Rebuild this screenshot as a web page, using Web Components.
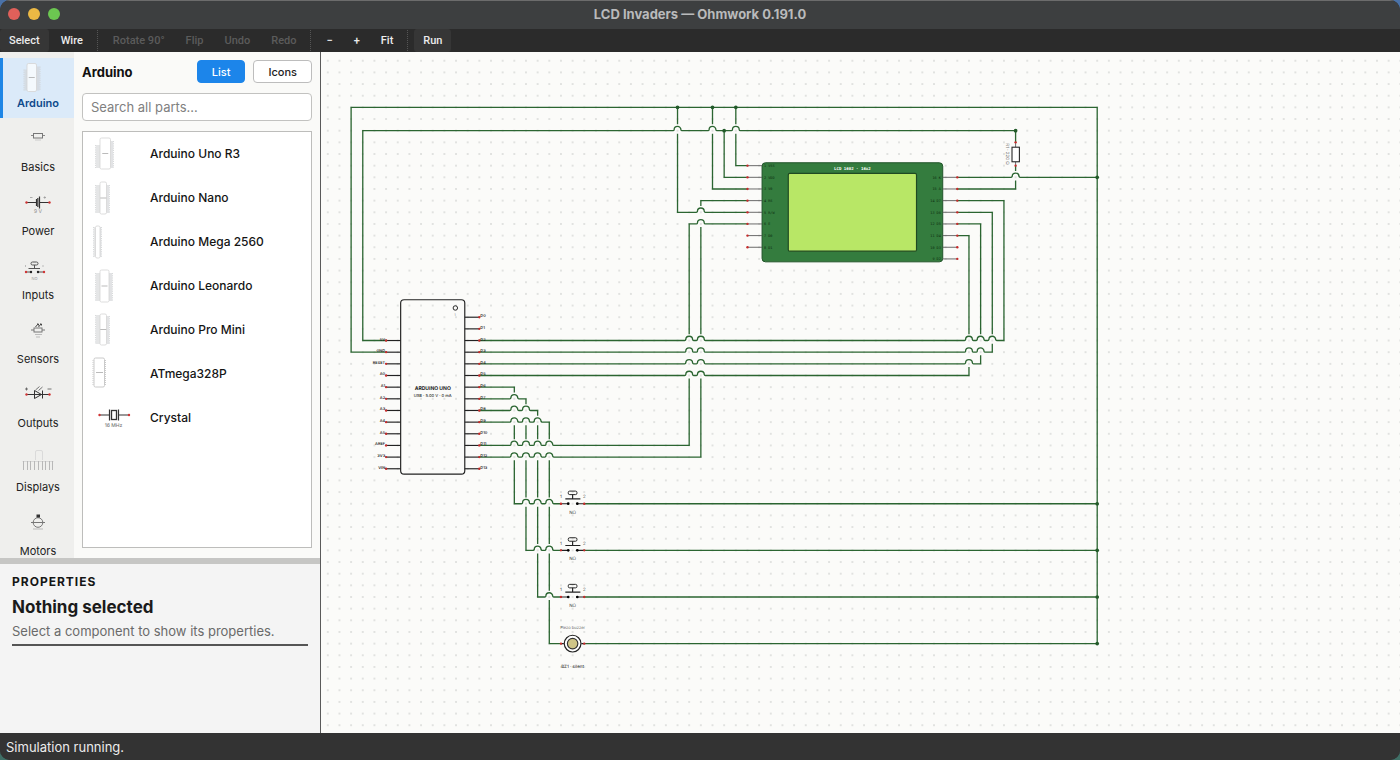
<!DOCTYPE html>
<html lang="en">
<head>
<meta charset="utf-8">
<title>LCD Invaders — Ohmwork 0.191.0</title>
<style>
html,body{margin:0;height:100%}
body{font-family:Inter,"Liberation Sans",sans-serif;font-size:13px;background:linear-gradient(#4a72a8,#5b7d86 50%,#3f6f66);overflow:hidden}
</style>
</head>
<body>
<ohm-window></ohm-window>
<script>
function define(name, html, setup) {
  const template = document.createElement('template');
  template.innerHTML = '<style>*{box-sizing:border-box}button,input{font:inherit;color:inherit;margin:0}</style>' + html;
  customElements.define(name, class extends HTMLElement {
    connectedCallback() {
      if (this.shadowRoot) return;
      this.attachShadow({ mode: 'open' }).append(template.content.cloneNode(true));
      if (setup) setup(this, this.shadowRoot);
    }
  });
}

/* ---- part artwork ---- */
const board = (l, r, t, b, bl, br, tl = t + 6, tr = t + 3) => `
  <rect x="${l + 1}" y="${tl}" width="${bl - l - 1}" height="${b - tl - 1}" fill="#cfd1d3" opacity=".55"/>
  <rect x="${br}" y="${tr}" width="${r - br - 1}" height="${b - tr - 1}" fill="#cfd1d3" opacity=".6"/>
  <path d="M${l + .5} ${tl}V${b - 1}M${r - .5} ${tr}V${b - 1}" stroke="#cfd1d3" stroke-dasharray="1.2 1" opacity=".8"/>
  <rect x="${bl}" y="${t}" width="${br - bl}" height="${b - t}" rx="1.5" fill="#fff" fill-opacity=".7" stroke="#d4d4d4" stroke-width=".8"/>
  <path d="M${(bl + br) / 2 - 3} ${(t + b) / 2}h6" stroke="#aaa" stroke-width=".8"/>`;
const dots = (y, ...xs) => xs.map(x => `<circle cx="${x}" cy="${y}" r="1.2" fill="#d03434"/>`).join('');
const ART = {
  arduino: board(23.5, 40.5, 5.5, 33.5, 27, 36.5),
  basics: `<g fill="none" stroke="#8a8a8a"><path d="M31 13.5h3M42 13.5h3"/><rect x="33.5" y="11.5" width="9" height="4.5" stroke="#777"/><path d="M35 18h6" stroke="#ccc"/></g>`,
  power: `<g stroke="#333" fill="none"><path d="M27 16.5h9M40 16.5h9"/><path d="M36.5 13v7M39.5 10.5v12" stroke-width="1.2"/><path d="M37.8 12v9" stroke-width="1.5" stroke="#555"/><path d="M30 11.5h2.5M43.5 11.5h2.5M44.7 10.3v2.4" stroke="#999" stroke-width=".8"/></g>${dots(16.5, 26.5, 49.5)}<text x="38" y="26.5" font-size="5" text-anchor="middle" fill="#888">9 V</text>`,
  inputs: `<g stroke="#555" fill="none"><rect x="31" y="12" width="7" height="3" rx="1.5"/><path d="M34.5 15v3.5M28.5 18.5h11.5M26 22h5M38 22h6"/></g><circle cx="31" cy="22" r="1.2" fill="#222"/><circle cx="38" cy="22" r="1.2" fill="#222"/>${dots(22, 26, 44)}<path d="M25.5 15v2M43 15v2" stroke="#bbb"/><text x="34.5" y="30" font-size="4" text-anchor="middle" fill="#999">NO</text>`,
  sensors: `<g stroke="#777" fill="none"><rect x="34" y="14" width="8" height="4"/><path d="M31 16h3M42 16h3"/><path d="M35.5 13l2.5-3M38.5 13l2.5-3M37 10h1.5v1.5M40 10h1.5v1.5" stroke="#444"/><path d="M35 20.5h7M36 23h4" stroke="#bbb"/></g>`,
  outputs: `<g stroke="#333" fill="none"><path d="M27 16.5h22M34.5 12.5v8l7-4zM42.5 12.5v8"/><path d="M35.5 12l4-3.5M38.5 12.5l4-3.5" stroke="#666" stroke-width=".9"/><path d="M25 11h3M26.5 9.5v3M47.5 11h4" stroke="#555" stroke-width=".8"/></g>${dots(16.5, 26.5, 49.5)}`,
  displays: `<g fill="none" stroke="#ccc"><path d="M35.5 18v-8q0-1.5 1.5-1.5h4q1.5 0 1.5 1.5v8" stroke="#dadada"/><path d="M22.5 19.5h31" stroke="#d8d8d8"/><path stroke="#b8b8b8" d="M23.5 19v9M27.5 19v9M30.5 19v9M34.5 19v9M38.5 19v9M42.5 19v9M45.5 19v9M49.5 19v9M52.5 19v9"/></g>`,
  motors: `<g stroke="#777" fill="none"><circle cx="38" cy="16.5" r="4.8"/><path d="M31 16.5h14"/><path d="M33 23h10" stroke="#bbb"/></g><rect x="36.5" y="8.5" width="3.5" height="3" fill="#333"/>`,
  uno: board(12, 31, 6, 37, 17, 27.5, 13, 9),
  nano: board(12, 27, 6, 38, 17, 23.5, 9, 9),
  mega: board(10, 19, 6, 38, 12.5, 17, 7, 7).replace(/<path[^>]*>$/, ''),
  leonardo: board(12, 30, 6, 38, 17, 26, 9, 9),
  promini: board(12, 27, 6, 37, 17, 23.5, 7, 8),
  atmega: `<rect x="11" y="6" width="10.5" height="29" rx="1.5" fill="#fff" stroke="#c4c4c4" stroke-width=".9"/><path d="M10 8v26M22.5 8v26" stroke="#ccc" stroke-width="1" stroke-dasharray="1 1"/><path d="M13 20.5h7" stroke="#aaa" stroke-width=".8"/>`,
  crystal: `<g stroke="#333" fill="none"><path d="M17 19h9M36 19h10M26.5 13.5v11M35.5 13.5v11" stroke-width="1.2"/><rect x="28.5" y="14.5" width="5" height="9" stroke-width="1.3"/></g>${dots(19, 16.5, 46)}<text x="30.5" y="31" font-size="5" text-anchor="middle" fill="#777">16 MHz</text>`
};
const art = (el, w, h) => `<svg width="${w}" height="${h}" viewBox="0 0 ${w} ${h}" text-rendering="geometricPrecision" aria-hidden="true">${ART[el.getAttribute('art')]}</svg>`;

/* ---- chrome ---- */
define('ohm-titlebar', `
<style>
:host{display:flex;align-items:center;height:29px;background:#3d3f40;border-top:1px solid #6c6c6c;padding:0 8px 2px;color:#b9babb}
.lights{display:flex;gap:8px;flex:1}
.lights button{width:12px;height:12px;border-radius:50%;border:0;padding:0}
.r{background:#e0605a}.y{background:#ecb944}.g{background:#6cc751}
h1{margin:0;font-size:13px;line-height:16px;font-weight:700}
.end{flex:1}
</style>
<div class="lights"><button class="r" aria-label="Close"></button><button class="y" aria-label="Minimize"></button><button class="g" aria-label="Zoom"></button></div>
<h1><slot></slot></h1><div class="end"></div>`);

define('ohm-tool', `
<style>
:host{display:flex}
button{border:0;background:none;color:#ececec;font-family:Roboto,Inter,sans-serif;font-size:11px;line-height:14px;font-weight:500;padding:0 9px;border-radius:3px}
button:disabled{color:#5b5b5b}
:host([active]) button{background:#363636}
</style><button><slot></slot></button>`, (host, root) => {
  root.querySelector('button').disabled = host.hasAttribute('disabled');
});

define('ohm-toolbar', `
<style>
:host{display:flex;gap:3px;height:23px;background:#2b2b2b}
i{width:1px;margin:1px 3px 1px 2px;border-left:1px dotted #555}
</style>
<ohm-tool active>Select</ohm-tool><ohm-tool>Wire</ohm-tool><i></i>
<ohm-tool disabled>Rotate 90°</ohm-tool><ohm-tool disabled>Flip</ohm-tool><ohm-tool disabled>Undo</ohm-tool><ohm-tool disabled>Redo</ohm-tool><i></i>
<ohm-tool>−</ohm-tool><ohm-tool>+</ohm-tool><ohm-tool>Fit</ohm-tool><i></i><ohm-tool active>Run</ohm-tool>`);

define('ohm-category', `
<style>
:host{display:block}
button{display:flex;flex-direction:column;align-items:center;width:100%;height:60px;border:0;padding:0 0 6px;background:none;color:#222;font-size:11px;line-height:18px;font-weight:400}
svg{display:block;flex:none}
span{padding-left:2px}
:host([active]) button{background:#dbeaf9;box-shadow:inset 3px 0 #1e86e6;color:#0f4a8c;font-weight:600}
</style><button><b></b><span><slot></slot></span></button>`, (host, root) => {
  root.querySelector('b').outerHTML = art(host, 74, 36);
});

define('ohm-categories', `
<style>
:host{display:flex;flex-direction:column;gap:4px;width:74px;flex:none;padding-top:6px;background:#efefed;overflow:hidden}
</style>
<ohm-category active art="arduino">Arduino</ohm-category><ohm-category art="basics">Basics</ohm-category>
<ohm-category art="power">Power</ohm-category><ohm-category art="inputs">Inputs</ohm-category>
<ohm-category art="sensors">Sensors</ohm-category><ohm-category art="outputs">Outputs</ohm-category>
<ohm-category art="displays">Displays</ohm-category><ohm-category art="motors">Motors</ohm-category>`);

define('ohm-part', `
<style>
:host{display:block}
button{display:flex;align-items:center;gap:7px;width:100%;height:44px;padding:0;border:0;background:none;text-align:left;font-size:12px;line-height:16px;font-weight:500;color:#151515}
svg{display:block;flex:none}
</style><button><b></b><span><slot></slot></span></button>`, (host, root) => {
  root.querySelector('b').outerHTML = art(host, 60, 44);
});

define('ohm-parts', `
<style>
:host{display:flex;flex-direction:column;flex:1;min-width:0;padding:8px 8px 10px}
header{display:flex;align-items:center;gap:8px;height:23px;margin-bottom:10px}
h2{margin:0;flex:1;font-size:13px;line-height:16px;font-weight:700;color:#111}
header button{height:23px;border:1px solid #bdbdbd;border-radius:4px;background:#fff;padding:0 14px;font-size:11px;line-height:14px;font-weight:500;color:#222}
header button.on{background:#1c85ea;border-color:#1c85ea;color:#fff}
input{display:block;width:100%;height:28px;flex:none;margin-bottom:10px;border:1px solid #c2c2c0;border-radius:4px;background:#fff;padding:0 8px;font-size:13px}
input::placeholder{color:#808080;opacity:1}
.list{flex:1;border:1px solid #bdbdbb;background:#fff;overflow:hidden}
</style>
<header><h2>Arduino</h2><button class="on">List</button><button>Icons</button></header>
<input type="text" placeholder="Search all parts…" aria-label="Search all parts">
<div class="list">
<ohm-part art="uno">Arduino Uno R3</ohm-part><ohm-part art="nano">Arduino Nano</ohm-part><ohm-part art="mega">Arduino Mega 2560</ohm-part>
<ohm-part art="leonardo">Arduino Leonardo</ohm-part><ohm-part art="promini">Arduino Pro Mini</ohm-part><ohm-part art="atmega">ATmega328P</ohm-part><ohm-part art="crystal">Crystal</ohm-part>
</div>`);

define('ohm-properties', `
<style>
:host{display:block;height:175px;flex:none;background:#f4f4f4;border-top:6px solid #c6c6c4;padding:10px 12px}
h3{margin:0;font-size:12px;line-height:16px;font-weight:700;letter-spacing:1px;color:#161616}
h2{margin:6px 0 5px;font-size:17px;line-height:22px;font-weight:700;color:#1b1b1b}
p{margin:0;padding-bottom:5px;border-bottom:2px solid #555;font-size:13px;line-height:16px;color:#6a6a6a}
</style>
<h3>PROPERTIES</h3><h2>Nothing selected</h2><p>Select a component to show its properties.</p>`);

/* ---- schematic: coordinates in WIRES and JUNCTIONS are grid cells, G units each ---- */
const G = 12;
const WIRES = [
  [3,20, 1,20, 1,2, 57,2, 57,3], [57,5, 57,7, 52,7],
  [3,21, 0,21, 0,0, 64,0, 64,46, 20,46],
  [64,6, 52,6], [64,34, 20,34], [64,38, 20,38], [64,42, 20,42],
  [33,0, 33,5, 34,5], [32,2, 32,6, 34,6], [31,0, 31,7, 34,7], [28,0, 28,9, 34,9],
  [34,8, 30,8, 30,30, 11,30], [34,10, 29,10, 29,29, 11,29],
  [52,8, 56,8, 56,20, 11,20], [52,9, 55,9, 55,21, 11,21], [52,10, 54,10, 54,22, 11,22], [52,11, 53,11, 53,23, 11,23],
  [11,24, 14,24, 14,34, 18,34], [11,25, 15,25, 15,38, 18,38], [11,26, 16,26, 16,42, 18,42], [11,27, 17,27, 17,46, 18,46]
];
const JUNCTIONS = [[28,0],[31,0],[33,0],[32,2],[57,2],[64,6],[64,34],[64,38],[64,42],[64,46]];

function drawWires() {
  const hs = [], vs = [];
  for (const w of WIRES) for (let i = 0; i + 3 < w.length; i += 2) {
    const [x1, y1, x2, y2] = w.slice(i, i + 4);
    if (y1 === y2) hs.push([Math.min(x1, x2), Math.max(x1, x2), y1]);
    else vs.push([Math.min(y1, y2), Math.max(y1, y2), x1]);
  }
  let d = '';
  for (const [a, b, y] of hs) {
    d += `M${a * G - .7} ${y * G}`;
    vs.filter(v => v[2] > a && v[2] < b && v[0] < y && v[1] > y).sort((p, q) => p[2] - q[2])
      .forEach(v => { d += `H${v[2] * G - 4.6}q.9 0 1.1-.9a3.5 3.5 0 0 1 7 0q.2 .9 1.1 .9`; });
    d += `H${b * G + .7}`;
  }
  for (const [a, b, x] of vs) {
    let from = a * G;
    const seg = to => { if (to - from > 3) d += `M${x * G} ${from}V${to}`; };
    hs.filter(h => h[2] > a && h[2] < b && h[0] < x && h[1] > x).sort((p, q) => p[2] - q[2])
      .forEach(h => { seg(h[2] * G - 6.5); from = h[2] * G + 3.2; });
    seg(b * G);
  }
  return `<path class="wire" d="${d}"/>` + JUNCTIONS.map(([x, y]) => `<circle class="j" cx="${x * G}" cy="${y * G}" r="1.9"/>`).join('');
}
const pin = (x, y) => `<circle class="pin" cx="${x * G}" cy="${y * G}" r="1.2"/>`;

function drawUno() {
  const left = ['5V','GND','RESET','A0','A1','A2','A3','A4','A5','AREF','3V3','VIN'];
  let s = '';
  left.forEach((t, i) => { const y = 20 + i; s += `<path class="lead" d="M36 ${y * G}H51"/>${pin(3, y)}<text class="lbl" x="35" y="${y * G}" text-anchor="end">${t}</text>`; });
  for (let i = 0; i < 14; i++) { const y = 18 + i; s += `<path class="lead" d="M117 ${y * G}H132"/>${pin(11, y)}<text class="lbl" x="133" y="${y * G}">D${i}</text>`; }
  return s + `<rect x="51" y="198" width="66" height="179.5" rx="3.5" fill="none" stroke="#222" stroke-width="1.2"/>
  <circle cx="107.3" cy="206.5" r="2.3" fill="none" stroke="#222"/><text x="107" y="214.5" font-size="3.6" text-anchor="middle" fill="#777">1</text>
  <text x="84" y="290.5" text-anchor="middle" font-size="5.2" font-weight="700" fill="#222">ARDUINO UNO</text>
  <text x="84" y="298.5" text-anchor="middle" font-size="4.2" font-weight="500" fill="#333">USB · 5.00 V · 0 mA</text>`;
}
function drawLcd() {
  const L = ['1 VSS','2 VDD','3 V0','4 RS','5 R/W','6 E','7 D0','8 D1'];
  const R = ['16 K','15 A','14 D7','13 D6','12 D5','11 D4','10 D3','9 D2'];
  let s = `<rect x="423" y="57" width="186" height="102" rx="3.5" fill="#347c3e" stroke="#1f5227" stroke-width="1"/>
  <rect x="450" y="68" width="132" height="80" rx="1.5" fill="#b8e766" stroke="#1f4a22" stroke-width="1.2"/>
  <text class="mono" x="516" y="64.8" text-anchor="middle" font-size="4.2" font-weight="700" fill="#fff">LCD 1602 · 16x2</text>`;
  L.forEach((t, i) => { const y = 5 + i; s += `<path class="thin" d="M408 ${y * G}H423"/>${pin(34, y)}<text class="mono pl" x="425" y="${y * G + 1.3}">${t}</text>`; });
  R.forEach((t, i) => { const y = 6 + i; s += `<path class="thin" d="M609 ${y * G}H624"/>${pin(52, y)}<text class="mono pl" x="607" y="${y * G + 1.3}" text-anchor="end">${t}</text>`; });
  return s;
}
const drawButton = row => { const y = row * G; return `
  <path class="lead" d="M216 ${y}H223M233 ${y}H240"/><circle cx="223.5" cy="${y}" r="1.4"/><circle cx="232.8" cy="${y}" r="1.4"/>${pin(18, row)}${pin(20, row)}
  <path class="lead" d="M220.5 ${y - 5}H236M228 ${y - 5}V${y - 9.5}"/><rect x="223.5" y="${y - 13}" width="9" height="3.6" rx="1.5" fill="none" stroke="#222" stroke-width="1"/>
  <g class="cap"><text x="216" y="${y - 6}" text-anchor="middle">1</text><text x="240" y="${y - 6}" text-anchor="middle">2</text><text x="228" y="${y + 10.3}" text-anchor="middle">NO</text></g>`; };

define('ohm-canvas', `
<style>
:host{display:block;flex:1;min-width:0;min-height:0;background:#fbfbf9;overflow:hidden}
svg{display:block;width:100%;height:100%;text-rendering:geometricPrecision}
.wire{fill:none;stroke:#2b6531;stroke-width:1.35}
.j{fill:#225a29}.pin{fill:#c92a2a}
.lead{fill:none;stroke:#222;stroke-width:1.2}
.thin{stroke:#555;stroke-width:.9}
.lbl{font-size:4px;font-weight:600;fill:#222}
.mono{font-family:"DejaVu Sans Mono","Liberation Mono",monospace}
.pl{font-size:3.6px;fill:#0c2a10}
.cap{font-size:4.6px;fill:#444}
</style>
<svg viewBox="-31 -57 1111 701" preserveAspectRatio="xMinYMin slice" role="img" aria-label="Circuit schematic">
<defs><pattern id="dots" x="-6" y="-6" width="12" height="12" patternUnits="userSpaceOnUse"><circle cx="6" cy="6" r=".8" fill="#c0c1bf"/></pattern></defs>
<rect x="-31" y="-57" width="1400" height="1000" fill="url(#dots)"/>
<g id="art"></g>
</svg>`, (host, root) => {
  root.getElementById('art').innerHTML = drawWires() + drawUno() + drawLcd() + drawButton(34) + drawButton(38) + drawButton(42) + `
  <path class="thin" d="M684 36V41M684 56V60"/><rect x="680.3" y="41" width="7.6" height="15" fill="#fff" stroke="#222" stroke-width="1.1"/>${pin(57, 3)}${pin(57, 5)}
  <text transform="translate(674 48) rotate(90)" text-anchor="middle" font-size="4.6" fill="#777">R1 · 220 Ω</text>
  <circle cx="228" cy="552" r="8.6" fill="#fff" stroke="#222" stroke-width="1.2"/><circle cx="228" cy="552" r="5.4" fill="#cfc587" stroke="#333" stroke-width="1.2"/>
  <path class="lead" d="M216 552h3M237 552h3"/>${pin(18, 46)}${pin(20, 46)}
  <text x="228" y="537" text-anchor="middle" font-size="4.2" fill="#666">Piezo buzzer</text>
  <text x="228" y="577.5" text-anchor="middle" font-size="4.6" font-weight="500" fill="#444">BZ1 · silent</text>`;
});

define('ohm-status', `
<style>:host{display:block;flex:none;background:#333;color:#ececec;height:27px;padding:6px;font-size:13px;line-height:16px}</style><slot></slot>`);

define('ohm-window', `
<style>
:host{display:flex;flex-direction:column;height:100vh;border-radius:10px;overflow:hidden;background:#333}
main{display:flex;flex:1;min-height:0}
aside{display:flex;flex-direction:column;width:321px;flex:none;border-right:1px solid #5a5a5a;background:#fafaf8}
.library{display:flex;flex:1;min-height:0}
</style>
<ohm-titlebar>LCD Invaders — Ohmwork 0.191.0</ohm-titlebar>
<ohm-toolbar></ohm-toolbar>
<main><aside><div class="library"><ohm-categories></ohm-categories><ohm-parts></ohm-parts></div><ohm-properties></ohm-properties></aside><ohm-canvas></ohm-canvas></main>
<ohm-status>Simulation running.</ohm-status>`);
</script>
</body>
</html>
